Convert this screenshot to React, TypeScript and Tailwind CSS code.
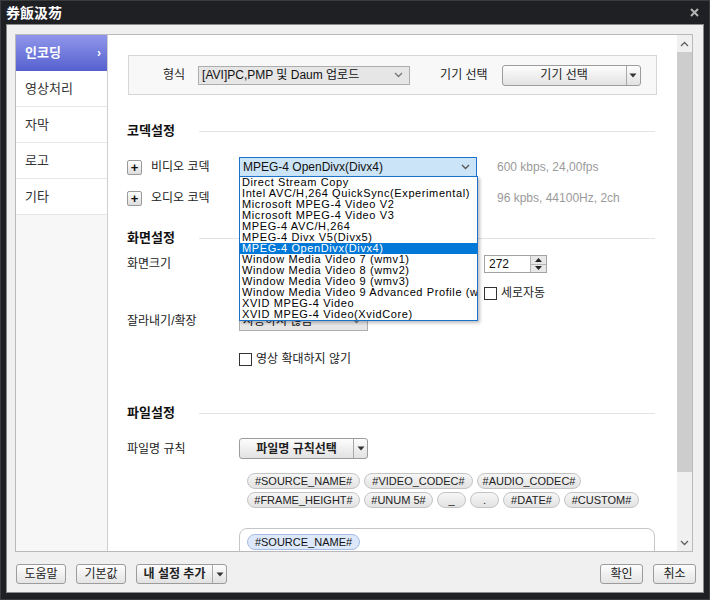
import React from 'react';

const codecs = [
  'Direct Stream Copy',
  'Intel AVC/H,264 QuickSync(Experimental)',
  'Microsoft MPEG-4 Video V2',
  'Microsoft MPEG-4 Video V3',
  'MPEG-4 AVC/H,264',
  'MPEG-4 Divx V5(Divx5)',
  'MPEG-4 OpenDivx(Divx4)',
  'Window Media Video 7 (wmv1)',
  'Window Media Video 8 (wmv2)',
  'Window Media Video 9 (wmv3)',
  'Window Media Video 9 Advanced Profile (wvc1)',
  'XVID MPEG-4 Video',
  'XVID MPEG-4 Video(XvidCore)',
];

const menu = ['인코딩', '영상처리', '자막', '로고', '기타'];

const tagsRow1 = [
  { t: '#SOURCE_NAME#', w: 'w-[113px]' },
  { t: '#VIDEO_CODEC#', w: 'w-[109px]' },
  { t: '#AUDIO_CODEC#', w: 'w-[104px]' },
];
const tagsRow2 = [
  { t: '#FRAME_HEIGHT#', w: 'w-[113px]' },
  { t: '#UNUM 5#', w: 'w-[69px]' },
  { t: '_', w: 'w-[29px]' },
  { t: '.', w: 'w-[29px]' },
  { t: '#DATE#', w: 'w-[57px]' },
  { t: '#CUSTOM#', w: 'w-[75px]' },
];

const Chevron = ({ up = false, className = '' }: { up?: boolean; className?: string }) => (
  <svg width="9" height="6" viewBox="0 0 9 6" className={className}>
    <path
      d={up ? 'M1 5 L4.5 1.5 L8 5' : 'M1 1 L4.5 4.5 L8 1'}
      fill="none"
      stroke="currentColor"
      strokeWidth="1.3"
    />
  </svg>
);

const Caret = () => (
  <svg width="8" height="5" viewBox="0 0 8 5">
    <path d="M0.5 0.5 L7.5 0.5 L4 4.5 Z" fill="#333" />
  </svg>
);

const Btn = ({ children, className = '' }: { children: React.ReactNode; className?: string }) => (
  <div
    className={`flex items-center justify-center h-[20px] rounded-[3px] border border-[#9c9c9c] bg-gradient-to-b from-[#fdfdfd] to-[#e4e4e4] text-[12px] text-[#222] ${className}`}
  >
    {children}
  </div>
);

const SplitBtn = ({ label, w, bold = false, h = 'h-[20px]' }: { label: string; w: string; bold?: boolean; h?: string }) => (
  <div className={`flex ${h} ${w} rounded-[3px] border border-[#9c9c9c] bg-gradient-to-b from-[#fdfdfd] to-[#e2e2e2] text-[12px] text-[#222]`}>
    <div className={`flex-1 flex items-center justify-center ${bold ? 'font-bold' : ''}`}>{label}</div>
    <div className="w-[14px] border-l border-[#a8a8a8] flex items-center justify-center">
      <Caret />
    </div>
  </div>
);

const PlusBtn = () => (
  <div className="w-[15px] h-[15px] rounded-[2px] border border-[#9a9a9a] bg-gradient-to-b from-[#fefefe] to-[#dedede] flex items-center justify-center text-[13px] font-bold leading-none text-[#111]">
    +
  </div>
);

const Heading = ({ title }: { title: string }) => (
  <div className="flex items-center h-[20px]">
    <span className="w-[72px] text-[13px] font-bold text-[#111]">{title}</span>
    <div className="flex-1 h-px bg-[#e3e3e3] mr-[2px]" />
  </div>
);

const GraySelect = ({ label, w }: { label: string; w: string }) => (
  <div className={`flex items-center h-[19px] ${w} border border-[#adadad] bg-[#e6e6e6] pl-[3px] pr-[6px] text-[12px] text-[#111]`}>
    <span className="flex-1 truncate">{label}</span>
    <Chevron className="text-[#777]" />
  </div>
);

const Check = ({ label }: { label: string }) => (
  <div className="flex items-center gap-[4px] text-[12px] text-[#222]">
    <div className="w-[13px] h-[13px] border border-[#333] bg-white" />
    <span>{label}</span>
  </div>
);

const Tag = ({ t, w, blue = false }: { t: string; w: string; blue?: boolean }) => (
  <div
    className={`flex items-center justify-center h-[16px] ${w} rounded-full border text-[11px] leading-none ${
      blue
        ? 'border-[#a6bde6] bg-[#dde8fb] text-[#111]'
        : 'border-[#c4c4c4] bg-gradient-to-b from-[#f6f6f6] to-[#e3e3e3] text-[#222]'
    }`}
  >
    {t}
  </div>
);

export default function App() {
  return (
    <div className="w-[710px] h-[600px] bg-[#1f2023] border border-[#3b3c3f] flex flex-col font-['Liberation_Sans','Noto_Sans_CJK_KR',sans-serif] select-none">
      {/* title bar */}
      <div className="h-[23px] shrink-0 flex items-center justify-between pl-[5px] pr-[10px]">
        <span className="text-[14px] font-bold text-white font-['Noto_Sans_CJK_SC',sans-serif]">券飯汲芴</span>
        <svg width="9" height="9" viewBox="0 0 9 9">
          <path d="M1 1 L8 8 M8 1 L1 8" stroke="#b4b4b4" strokeWidth="2" />
        </svg>
      </div>

      {/* body */}
      <div className="mx-[5px] h-[569px] shrink-0 border border-[#8a8a8a] bg-[#f0f0f0] flex flex-col">
        <div className="mt-[9px] ml-[8px] mr-[10px] h-[518px] shrink-0 border border-[#b9b9b9] flex bg-white">
          {/* sidebar */}
          <div className="w-[92px] border-r border-[#cfcfcf] bg-[#f7f7f7] flex flex-col">
            {menu.map((m, i) =>
              i === 0 ? (
                <div
                  key={m}
                  className="h-[36px] flex items-center justify-between pl-[9px] pr-[6px] bg-gradient-to-b from-[#9096ea] to-[#5661cf] text-white text-[13px] font-bold"
                >
                  <span>{m}</span>
                  <span className="text-[12px]">›</span>
                </div>
              ) : (
                <div key={m} className="h-[36px] flex items-center pl-[9px] bg-white border-b border-[#e6e6e6] text-[13px] text-[#333]">
                  {m}
                </div>
              )
            )}
          </div>

          {/* main */}
          <div className="flex-1 relative overflow-hidden pl-[19px] pr-[20px] pt-[20px] text-[12px] text-[#222]">
            {/* format box */}
            <div className="ml-[1px] h-[40px] border border-[#d6d6d6] bg-[#f8f8f8] flex items-center pl-[34px]">
              <span className="text-[12px]">형식</span>
              <GraySelect label="[AVI]PC,PMP 및 Daum 업로드" w="w-[212px] ml-[13px]" />
              <span className="ml-[30px]">기기 선택</span>
              <div className="ml-[14px]">
                <SplitBtn label="기기 선택" w="w-[139px]" h="h-[21px]" />
              </div>
            </div>

            <div className="mt-[26px]">
              <Heading title="코덱설정" />
            </div>

            {/* video codec */}
            <div className="mt-[16px] h-[20px] flex items-center relative z-10">
              <div className="w-[112px] flex items-center gap-[9px]">
                <PlusBtn />
                <span>비디오 코덱</span>
              </div>
              <div className="relative w-[238px] h-[20px]">
                <div className="h-[20px] border border-[#1a72cc] bg-[#cce4f7] flex items-center pl-[3px] pr-[6px] text-[12px] text-[#111]">
                  <span className="flex-1">MPEG-4 OpenDivx(Divx4)</span>
                  <Chevron className="text-[#555]" />
                </div>
                <div className="absolute left-0 top-[19px] w-[239px] border border-[#1a72cc] bg-white shadow-[2px_2px_3px_rgba(0,0,0,0.25)] overflow-hidden">
                  {codecs.map((c) => (
                    <div
                      key={c}
                      className={`h-[11px] leading-[11px] pl-[2px] whitespace-nowrap text-[11px] tracking-[0.6px] ${
                        c === 'MPEG-4 OpenDivx(Divx4)' ? 'bg-[#0078d7] text-white' : 'text-black'
                      }`}
                    >
                      {c}
                    </div>
                  ))}
                </div>
              </div>
              <span className="ml-[20px] text-[#9a9a9a]">600 kbps, 24,00fps</span>
            </div>

            {/* audio codec (its select is hidden under the open list) */}
            <div className="mt-[11px] h-[20px] flex items-center">
              <div className="w-[112px] flex items-center gap-[9px]">
                <PlusBtn />
                <span>오디오 코덱</span>
              </div>
              <div className="w-[238px]" />
              <span className="ml-[20px] text-[#9a9a9a]">96 kpbs, 44100Hz, 2ch</span>
            </div>

            <div className="mt-[20px]">
              <Heading title="화면설정" />
            </div>

            {/* screen size */}
            <div className="mt-[6px] h-[20px] flex items-center">
              <span className="w-[112px]">화면크기</span>
              <div className="w-[245px]" />
              <div className="flex h-[18px] w-[63px] border border-[#a3a3a3] bg-white">
                <span className="flex-1 pl-[4px] leading-[16px] text-[12px] text-[#111]">272</span>
                <div className="w-[16px] border-l border-[#b5b5b5] bg-[#e8e8e8] flex flex-col">
                  <div className="flex-1 flex items-center justify-center border-b border-[#b5b5b5]">
                    <svg width="7" height="4" viewBox="0 0 7 4"><path d="M0 4 L3.5 0 L7 4 Z" fill="#222" /></svg>
                  </div>
                  <div className="flex-1 flex items-center justify-center">
                    <svg width="7" height="4" viewBox="0 0 7 4"><path d="M0 0 L3.5 4 L7 0 Z" fill="#222" /></svg>
                  </div>
                </div>
              </div>
            </div>

            <div className="mt-[9px] h-[20px] flex items-center pl-[357px]">
              <Check label="세로자동" />
            </div>

            {/* crop / expand */}
            <div className="mt-[8px] h-[20px] flex items-center">
              <span className="w-[112px]">잘라내기/확장</span>
              <GraySelect label="사용하지 않음" w="w-[129px]" />
            </div>

            <div className="mt-[18px] h-[20px] flex items-center pl-[112px]">
              <Check label="영상 확대하지 않기" />
            </div>

            <div className="mt-[34px]">
              <Heading title="파일설정" />
            </div>

            {/* file name rule */}
            <div className="mt-[15px] h-[21px] flex items-center">
              <span className="w-[112px]">파일명 규칙</span>
              <SplitBtn label="파일명 규칙선택" w="w-[129px]" h="h-[21px]" bold />
            </div>

            <div className="mt-[14px] ml-[120px] flex flex-col gap-[3px]">
              <div className="flex gap-[4px]">
                {tagsRow1.map((t) => (
                  <Tag key={t.t} t={t.t} w={t.w} />
                ))}
              </div>
              <div className="flex gap-[4px]">
                {tagsRow2.map((t) => (
                  <Tag key={t.t} t={t.t} w={t.w} />
                ))}
              </div>
            </div>

            <div className="mt-[20px] ml-[112px] mr-[2px] h-[80px] border border-[#c6c6c6] rounded-t-[8px] bg-white pt-[5px] pl-[7px]">
              <Tag t="#SOURCE_NAME#" w="w-[113px]" blue />
            </div>
          </div>

          {/* scrollbar */}
          <div className="w-[15px] bg-[#f0f0f0] flex flex-col">
            <div className="h-[17px] flex items-center justify-center text-[#606060]">
              <Chevron up />
            </div>
            <div className="h-[420px] bg-[#cdcdcd]" />
            <div className="flex-1" />
            <div className="h-[17px] flex items-center justify-center text-[#606060]">
              <Chevron />
            </div>
          </div>
        </div>

        {/* footer */}
        <div className="flex-1 flex items-start justify-between pt-[12px] pl-[9px] pr-[7px]">
          <div className="flex gap-[10px]">
            <Btn className="w-[50px]">도움말</Btn>
            <Btn className="w-[50px]">기본값</Btn>
            <SplitBtn label="내 설정 추가" w="w-[91px]" bold />
          </div>
          <div className="flex gap-[10px]">
            <Btn className="w-[43px]">확인</Btn>
            <Btn className="w-[43px]">취소</Btn>
          </div>
        </div>
      </div>
    </div>
  );
}
